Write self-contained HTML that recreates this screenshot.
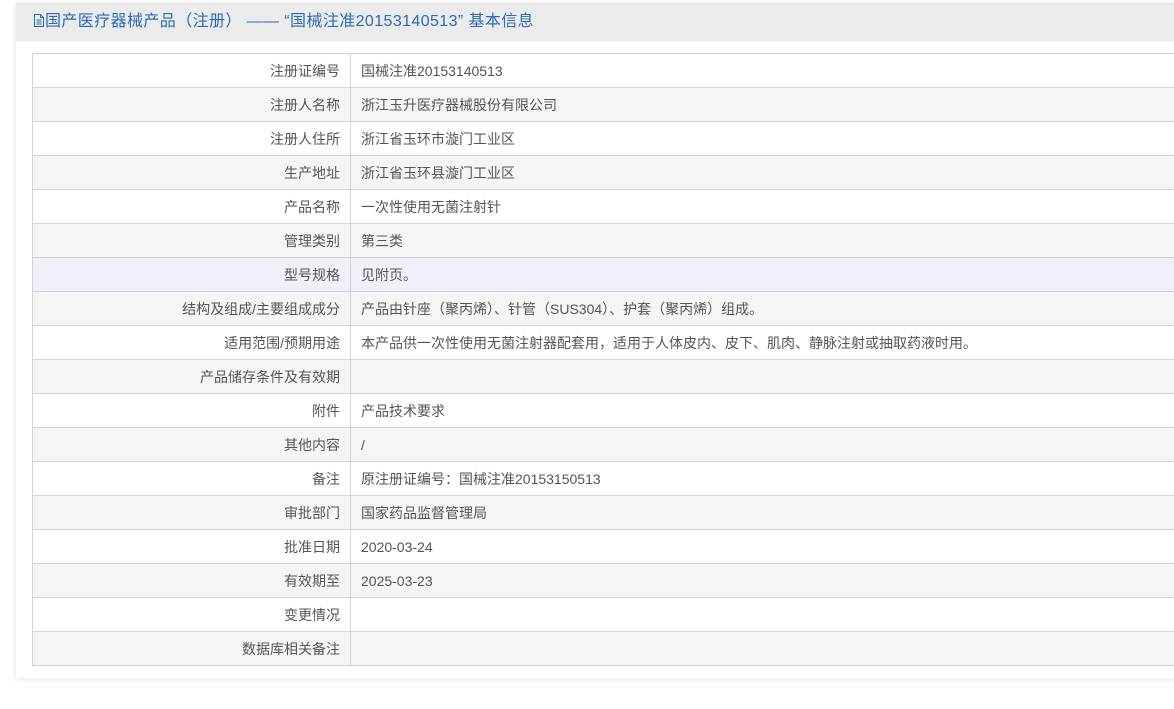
<!DOCTYPE html>
<html><head><meta charset="utf-8"><style>
body{margin:0;background:#fff;font-family:"Liberation Sans","Noto Sans CJK SC",sans-serif;width:1174px;height:709px;overflow:hidden;position:relative}
.panel{position:absolute;left:16px;top:3px;width:1170px;height:675px;background:#fff;box-shadow:0 1px 6px rgba(0,0,0,.12)}
.hd{height:38px;background:#ebebeb;color:#2b6cb5;font-size:16px;line-height:38px;padding-left:17px;white-space:nowrap;letter-spacing:.4px}
table{position:absolute;left:16px;top:50px;border-collapse:collapse;width:1160px;font-size:14px;color:#555}
td{border:1px solid #d4d4d4;height:33px;padding:0 10px;box-sizing:content-box;white-space:nowrap}
td.l{width:297px;text-align:right}
tr:nth-child(even) td{background:#f5f5f5}
tr.h td{background:#eef1f7}
</style></head><body>
<div class="panel"><div class="hd"><svg width="12" height="13" viewBox="0 0 12 13" style="vertical-align:-1px"><path d="M1.5 .5h6l3 3v9h-9z M7.5 .5v3h3 M3.5 6h5 M3.5 8h5 M3.5 10h5" fill="none" stroke="#2b6cb5"/></svg>国产医疗器械产品（注册） —— “国械注准20153140513” 基本信息</div>
<table>
<tr><td class="l">注册证编号</td><td>国械注准20153140513</td></tr>
<tr><td class="l">注册人名称</td><td>浙江玉升医疗器械股份有限公司</td></tr>
<tr><td class="l">注册人住所</td><td>浙江省玉环市漩门工业区</td></tr>
<tr><td class="l">生产地址</td><td>浙江省玉环县漩门工业区</td></tr>
<tr><td class="l">产品名称</td><td>一次性使用无菌注射针</td></tr>
<tr><td class="l">管理类别</td><td>第三类</td></tr>
<tr class="h"><td class="l">型号规格</td><td>见附页。</td></tr>
<tr><td class="l">结构及组成/主要组成成分</td><td>产品由针座（聚丙烯）、针管（SUS304）、护套（聚丙烯）组成。</td></tr>
<tr><td class="l">适用范围/预期用途</td><td>本产品供一次性使用无菌注射器配套用，适用于人体皮内、皮下、肌肉、静脉注射或抽取药液时用。</td></tr>
<tr><td class="l">产品储存条件及有效期</td><td></td></tr>
<tr><td class="l">附件</td><td>产品技术要求</td></tr>
<tr><td class="l">其他内容</td><td>/</td></tr>
<tr><td class="l">备注</td><td>原注册证编号：国械注准20153150513</td></tr>
<tr><td class="l">审批部门</td><td>国家药品监督管理局</td></tr>
<tr><td class="l">批准日期</td><td>2020-03-24</td></tr>
<tr><td class="l">有效期至</td><td>2025-03-23</td></tr>
<tr><td class="l">变更情况</td><td></td></tr>
<tr><td class="l">数据库相关备注</td><td></td></tr>
</table></div>
</body></html>
